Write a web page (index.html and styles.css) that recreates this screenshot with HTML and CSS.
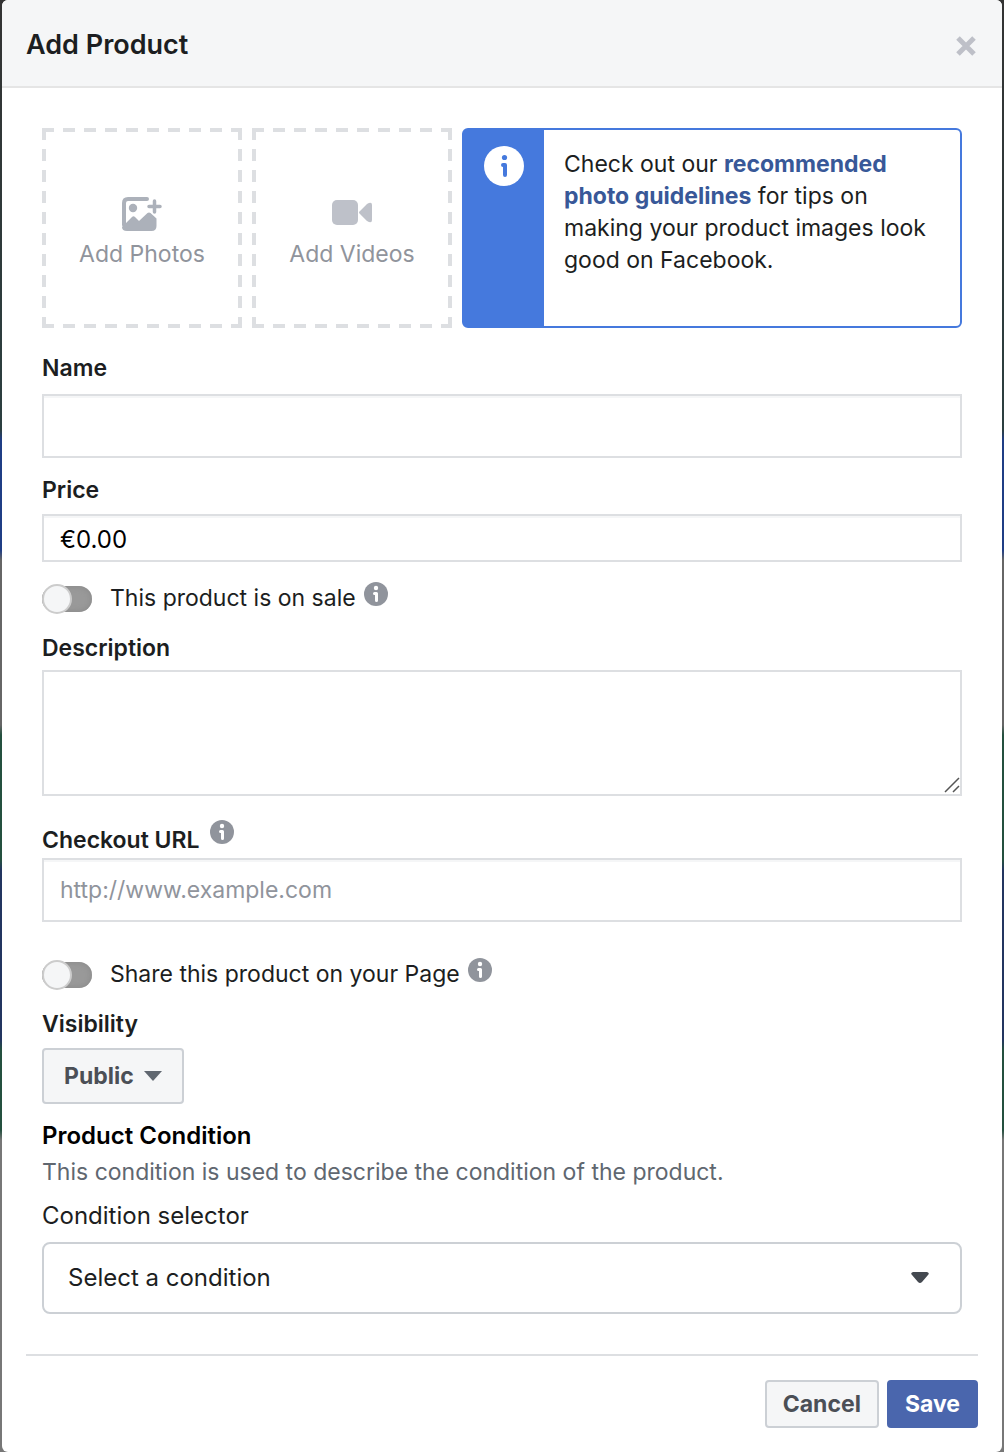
FILE: index.html
```html
<!DOCTYPE html>
<html lang="en">
<head>
    <meta charset="UTF-8">
    <meta name="viewport" content="width=device-width, initial-scale=1.0">
    <title>Add Product</title>
    <link rel="stylesheet" href="styles.css">
</head>
<body>
    <svg class="sprite" aria-hidden="true">
        <symbol id="info" viewBox="0 0 24 24">
            <circle cx="12" cy="12" r="12"/>
            <circle class="info-mark" cx="12" cy="6" r="2.2"/>
            <path class="info-stroke" d="M10.500 11.500h2v7"/>
        </symbol>
    </svg>

    <form class="modal">
        <header class="modal-header">
            <h1>Add Product</h1>
            <button type="button" class="close" aria-label="Close">
                <svg width="20" height="20" viewBox="0 0 20 20"><path d="M2 2l16 16M18 2L2 18" stroke="#bec0c8" stroke-width="5"/></svg>
            </button>
        </header>

        <main class="modal-body">
            <div class="media">
                <button type="button" class="upload">
                    <svg width="40" height="36" viewBox="0 0 40 36">
                        <path d="M25 3H6Q2 3 2 7v22" fill="none" stroke="#acb1ba" stroke-width="4" stroke-linecap="round"/>
                        <circle cx="11" cy="12" r="4.200" fill="#acb1ba"/>
                        <path d="M0 31l3-3 7-7q1.500-1.500 3 0l4 4 8.500-8q1.500-1.200 3 0l6 5.500v7.500q0 5-5 5H5q-5 0-5-4z" fill="#acb1ba"/>
                        <path d="M32.500 5v11M27 10.500h11" stroke="#acb1ba" stroke-width="3.500" stroke-linecap="round"/>
                    </svg>
                    Add Photos
                </button>
                <button type="button" class="upload">
                    <svg width="40" height="36" viewBox="0 0 40 36">
                        <rect y="4" width="26" height="25" rx="5" fill="#bec1c9"/>
                        <path d="M28 15l7-7q5-3 5 1v15q0 4-5 1l-7-7q-2-1.500 0-3z" fill="#bec1c9"/>
                    </svg>
                    Add Videos
                </button>
                <div class="tip">
                    <div class="tip-icon">
                        <svg width="40" height="40" viewBox="0 0 40 40">
                            <circle cx="20" cy="20" r="20" fill="#fff"/>
                            <circle cx="20.5" cy="11.5" r="2.600" fill="#4579dd"/>
                            <path d="M19 19h2v10" fill="none" stroke="#4579dd" stroke-width="4" stroke-linecap="round" stroke-linejoin="round"/>
                        </svg>
                    </div>
                    <p>Check out our <a href="#">recommended photo guidelines</a> for tips on making your product images look good on Facebook.</p>
                </div>
            </div>

            <div class="field name">
                <label for="name">Name</label>
                <input type="text" id="name">
            </div>

            <div class="field price">
                <label for="price">Price</label>
                <input type="text" id="price" value="€0.00">
            </div>

            <div class="toggle">
                <input type="checkbox" id="sale">
                <label for="sale">This product is on sale</label>
                <svg class="info" width="24" height="24"><use href="#info"/></svg>
            </div>

            <div class="field description">
                <label for="description">Description</label>
                <div class="textarea">
                    <textarea id="description"></textarea>
                    <svg class="grip" width="16" height="16" viewBox="0 0 16 16"><path d="M1 15L15 1M9 15l6-6" stroke="#555" stroke-width="1.500"/></svg>
                </div>
            </div>

            <div class="field url">
                <div class="label-row">
                    <label for="url">Checkout URL</label>
                    <svg class="info" width="24" height="24"><use href="#info"/></svg>
                </div>
                <input type="url" id="url" placeholder="http://www.example.com">
            </div>

            <div class="toggle share">
                <input type="checkbox" id="share">
                <label for="share">Share this product on your Page</label>
                <svg class="info" width="24" height="24"><use href="#info"/></svg>
            </div>

            <div class="field">
                <label for="visibility">Visibility</label>
                <div class="select visibility">
                    <select id="visibility"><option>Public</option></select>
                    <svg width="18" height="10" viewBox="0 0 18 10"><path d="M0 0h18L9 10z" fill="#606770"/></svg>
                </div>
            </div>

            <section class="condition">
                <h2>Product Condition</h2>
                <p>This condition is used to describe the condition of the product.</p>
                <label for="condition">Condition selector</label>
                <div class="select">
                    <select id="condition"><option>Select a condition</option></select>
                    <svg width="18" height="12" viewBox="0 0 18 12"><path d="M2 0h14q3 1 1 3l-6 7q-2 2-4 0L1 3q-2-2 1-3z" fill="#444950"/></svg>
                </div>
            </section>
        </main>

        <footer class="modal-footer">
            <button type="button" class="cancel">Cancel</button>
            <button type="submit" class="save">Save</button>
        </footer>
    </form>
</body>
</html>
```

FILE: styles.css
```css
* {
    box-sizing: border-box;
}
body {
    margin: 0;
    padding: 0 2px;
    background: linear-gradient(#333 0, #2b3f40 430px, #1f3d85 440px, #1f3d85 550px, #666 560px, #666 725px, #24503f 735px, #24503f 860px, #233560 870px, #233560 1040px, #24503f 1050px, #24503f 1130px, #777 1140px);
    color: #1c1e21;
    font-family: Inter, Roboto, sans-serif;
    font-size: 23px;
    line-height: 32px;
}
h1, h2, p {
    margin: 0;
}
button, input, textarea, select {
    font: inherit;
    color: inherit;
}
button {
    cursor: pointer;
}
svg {
    display: block;
}
.sprite {
    position: absolute;
    width: 0;
    height: 0;
}
.modal {
    background: #fff;
    border-radius: 6px;
    overflow: hidden;
}
.modal-header {
    display: flex;
    justify-content: space-between;
    align-items: center;
    height: 88px;
    padding: 4px 24px 0;
    background: #f5f6f7;
    border-bottom: 2px solid #e5e5e5;
}
h1 {
    font-size: 27px;
    font-weight: 600;
}
.close {
    padding: 4px 2px 2px;
    border: 0;
    background: none;
}
.modal-body {
    padding: 40px 40px 0;
}

/* photos, videos and the tip */
.media {
    display: flex;
    gap: 10px;
    margin-bottom: 24px;
}
.upload {
    --dash: #dddfe2 0 12px, transparent 12px 21px;
    display: flex;
    flex-direction: column;
    align-items: center;
    justify-content: center;
    gap: 6px;
    width: 200px;
    height: 200px;
    padding: 10px 0 0;
    border: 0;
    background:
        repeating-linear-gradient(90deg, var(--dash)) top / 100% 4px no-repeat,
        repeating-linear-gradient(90deg, var(--dash)) bottom / 100% 4px no-repeat,
        repeating-linear-gradient(180deg, var(--dash)) left / 4px 100% no-repeat,
        repeating-linear-gradient(180deg, var(--dash)) right / 4px 100% no-repeat;
    color: #90949c;
}
.tip {
    display: flex;
    flex: 1;
    border: 2px solid #4579dd;
    border-radius: 6px;
}
.tip-icon {
    padding: 16px 20px;
    background: #4579dd;
}
.tip p {
    flex: 1;
    padding: 18px 20px;
}
.tip a {
    color: #385898;
    font-weight: 700;
    text-decoration: none;
}
.info {
    fill: #90949c;
}
.info-mark {
    fill: #fff;
}
.info-stroke {
    fill: none;
    stroke: #fff;
    stroke-width: 3;
    stroke-linecap: round;
    stroke-linejoin: round;
}

/* fields */
.field {
    margin-bottom: 16px;
}
.field label {
    display: block;
    margin-bottom: 8px;
    font-weight: 600;
}
.field input, textarea {
    display: block;
    width: 100%;
    height: 64px;
    padding: 0 16px;
    border: 2px solid #dddfe2;
    background: #fff;
    box-shadow: inset 0 2px #f5f6f7;
}
.field input::placeholder {
    color: #90949c;
    opacity: 1;
}
.name label {
    margin-bottom: 10px;
}
.price input {
    height: 48px;
    padding-top: 2px;
    color: #000;
    font-size: 24px;
}
.description label {
    margin-bottom: 6px;
}
.textarea {
    position: relative;
}
.field textarea {
    height: 126px;
    box-shadow: none;
    resize: none;
}
.grip {
    position: absolute;
    right: 2px;
    bottom: 3px;
}
.url {
    margin-top: 24px;
}
.label-row {
    display: flex;
    align-items: flex-start;
    gap: 10px;
}
.field .label-row label {
    margin: 4px 0 2px;
}
.toggle {
    display: flex;
    align-items: center;
    margin: 20px 0 18px;
}
.toggle.share {
    margin-top: 36px;
}
.toggle input {
    appearance: none;
    position: relative;
    width: 50px;
    height: 26px;
    margin: 2px 18px 0 0;
    border-radius: 13px;
    background: #999;
    box-shadow: inset 0 0 6px #888;
}
.toggle input::before {
    content: "";
    position: absolute;
    top: -2px;
    left: 0;
    box-sizing: border-box;
    width: 30px;
    height: 30px;
    border: 2px solid #ccc;
    border-radius: 50%;
    background: #f5f6f7;
}
.toggle input:checked::before {
    left: 20px;
}
.toggle .info {
    margin: 0 0 8px 8px;
}

/* drop-downs */
.select {
    position: relative;
}
.select select {
    appearance: none;
    display: block;
    width: 100%;
    height: 72px;
    padding: 0 24px;
    border: 2px solid #ccd0d5;
    border-radius: 8px;
    background: #fff;
}
.select svg {
    position: absolute;
    top: 50%;
    right: 33px;
    transform: translateY(-50%);
    pointer-events: none;
}
.select.visibility {
    width: 142px;
}
.visibility select {
    height: 56px;
    padding: 0 20px;
    border-radius: 4px;
    background: #f5f6f7;
    color: #4b4f56;
    font-weight: 700;
}
.visibility svg {
    right: 22px;
}
.condition {
    font-size: 24px;
}
.condition h2 {
    color: #000;
    font-size: 24px;
    font-weight: 600;
}
.condition p {
    margin: 4px 0 12px;
    color: #606770;
    font-size: 23px;
}
.condition label {
    display: block;
    margin-bottom: 10px;
}

.modal-footer {
    display: flex;
    justify-content: flex-end;
    gap: 8px;
    margin: 40px 24px 0;
    padding: 24px 0;
    border-top: 2px solid #dddfe2;
}
.modal-footer button {
    height: 48px;
    padding: 0 16px;
    border: 2px solid #ccd0d5;
    border-radius: 4px;
    background: #f5f6f7;
    color: #4b4f56;
    font-weight: 700;
}
.modal-footer .save {
    border-color: #4a66ad;
    background: #4a66ad;
    color: #fff;
}
```
